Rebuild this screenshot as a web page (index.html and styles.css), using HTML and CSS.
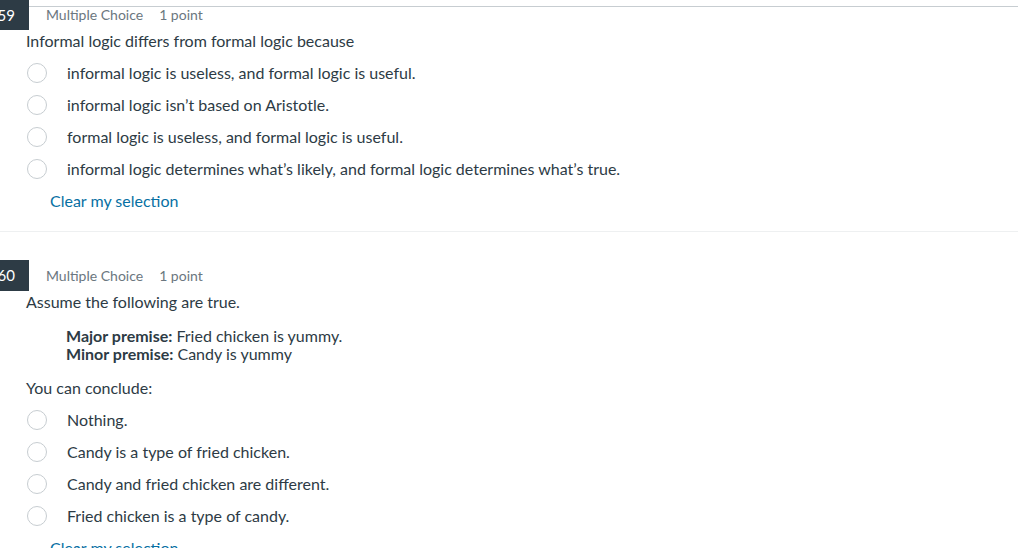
FILE: index.html
```html
<!DOCTYPE html>
<html>
<head>
<meta charset="utf-8">
<link rel="stylesheet" href="styles.css">
</head>
<body>
<div class="quiz">
  <section class="question q-first">
    <div class="q-header">
      <div class="badge">59</div>
      <div class="meta meta-lined"><span class="type">Multiple Choice</span><span class="points">1 point</span></div>
    </div>
    <div class="q-body">
      <p class="prompt">Informal logic differs from formal logic because</p>
      <ul class="answers">
        <li class="answer"><span class="radio"></span><span class="label">informal logic is useless, and formal logic is useful.</span></li>
        <li class="answer"><span class="radio"></span><span class="label">informal logic isn’t based on Aristotle.</span></li>
        <li class="answer"><span class="radio"></span><span class="label">formal logic is useless, and formal logic is useful.</span></li>
        <li class="answer"><span class="radio"></span><span class="label">informal logic determines what’s likely, and formal logic determines what’s true.</span></li>
      </ul>
      <a class="clear" href="#">Clear my selection</a>
    </div>
  </section>
  <div class="separator"></div>
  <section class="question q-second">
    <div class="q-header">
      <div class="badge">60</div>
      <div class="meta"><span class="type">Multiple Choice</span><span class="points">1 point</span></div>
    </div>
    <div class="q-body">
      <p class="prompt">Assume the following are true.</p>
      <div class="premises">
        <div><strong>Major premise:</strong> Fried chicken is yummy.</div>
        <div><strong>Minor premise:</strong> Candy is yummy</div>
      </div>
      <p class="prompt conclude">You can conclude:</p>
      <ul class="answers">
        <li class="answer"><span class="radio"></span><span class="label">Nothing.</span></li>
        <li class="answer"><span class="radio"></span><span class="label">Candy is a type of fried chicken.</span></li>
        <li class="answer"><span class="radio"></span><span class="label">Candy and fried chicken are different.</span></li>
        <li class="answer"><span class="radio"></span><span class="label">Fried chicken is a type of candy.</span></li>
      </ul>
      <a class="clear" href="#">Clear my selection</a>
    </div>
  </section>
</div>
</body>
</html>
```
FILE: styles.css
```css
html, body {
  margin: 0;
  padding: 0;
  background: #ffffff;
  overflow: hidden;
}
body {
  font-family: Lato, "Open Sans", "Liberation Sans", sans-serif;
  color: #2d3b45;
  width: 1018px;
  height: 548px;
}
.quiz {
  display: flex;
  flex-direction: column;
}
.q-header {
  display: flex;
  align-items: flex-start;
  height: 30px;
}
.badge {
  flex: none;
  width: 49px;
  margin-left: -20px;
  height: 30px;
  box-sizing: border-box;
  padding-right: 14px;
  background: #2d3b45;
  color: #ffffff;
  font-size: 15px;
  line-height: 30px;
  text-align: right;
}
.q-second .q-header {
  height: 31px;
}
.q-second .badge {
  height: 31px;
  line-height: 31px;
}
.meta {
  flex: 1;
  display: flex;
  gap: 16px;
  padding-left: 17px;
  margin-top: 8px;
  font-size: 14px;
  line-height: 16px;
  color: #6b7780;
}
.meta-lined {
  margin-top: 6px;
  border-top: 1px solid #c7cdd1;
}
.q-body {
  padding-left: 26px;
}
.prompt {
  margin: 1px 0 0;
  font-size: 16px;
  line-height: 20px;
}
.premises {
  margin: 15px 0 0 40px;
  font-size: 16px;
  line-height: 18px;
}
.premises strong {
  font-weight: 700;
}
.conclude {
  margin-top: 15px;
}
.answers {
  list-style: none;
  margin: 6px 0 0;
  padding: 0;
}
.answer {
  display: flex;
  align-items: center;
  height: 32px;
  font-size: 16px;
}
.radio {
  flex: none;
  width: 20px;
  height: 20px;
  box-sizing: border-box;
  border: 1px solid #c7cdd1;
  border-radius: 50%;
  margin-left: 1px;
  margin-right: 20px;
  background: #fff;
}
.label {
  line-height: 20px;
}
.clear {
  display: block;
  width: max-content;
  margin: 6px 0 0 24px;
  font-size: 16px;
  line-height: 20px;
  color: #0770a3;
  text-decoration: none;
}
.separator {
  height: 1px;
  background: #eef0f1;
  margin: 20px 0 28px;
}
```
